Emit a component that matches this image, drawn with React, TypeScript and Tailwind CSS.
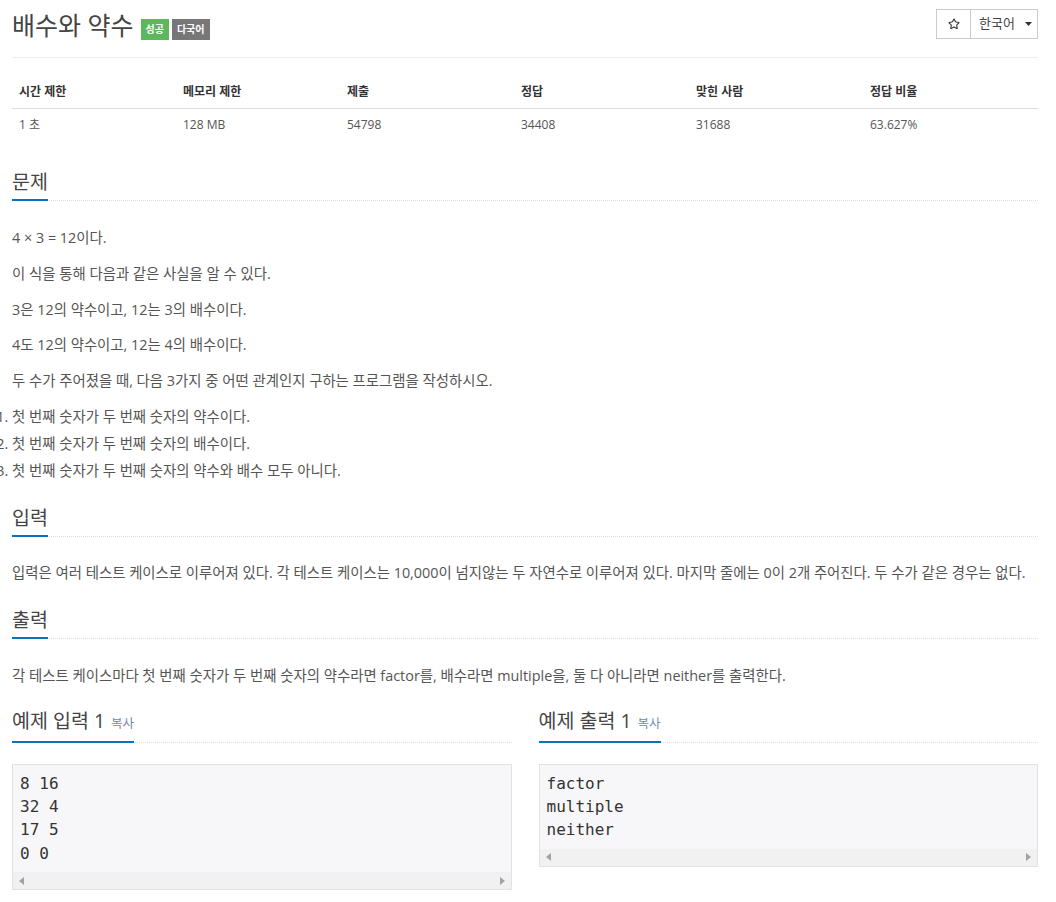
import React from "react";
import { Star } from "lucide-react";

function SectionHeading({ children }: { children: React.ReactNode }) {
  return (
    <div className="border-b border-dotted border-[#dddddd]">
      <h2 className="-mb-px inline-block border-b-2 border-[#0076c0] pb-[3px] text-[19.5px] leading-[28px] font-normal text-[#444]">
        {children}
      </h2>
    </div>
  );
}

function ScrollBar() {
  return (
    <div className="flex h-[17px] items-center justify-between bg-[#f1f1f1]">
      <div className="flex h-[17px] w-[17px] items-center justify-center">
        <svg width="5" height="8" viewBox="0 0 5 8">
          <polygon points="5,0 5,8 0,4" fill="#a3a3a3" />
        </svg>
      </div>
      <div className="flex h-[17px] w-[17px] items-center justify-center">
        <svg width="5" height="8" viewBox="0 0 5 8">
          <polygon points="0,0 0,8 5,4" fill="#a3a3a3" />
        </svg>
      </div>
    </div>
  );
}

function SampleBox({ lines }: { lines: string[] }) {
  return (
    <div className="mt-[21px] border border-[#e1e1e8] bg-[#f7f7f9]">
      <pre className="px-[7px] py-[7px] font-['DejaVu_Sans_Mono',monospace] text-[16px] leading-[23.33px] text-[#333]">
        {lines.join("\n")}
      </pre>
      <ScrollBar />
    </div>
  );
}

export default function App() {
  const stats = [
    ["시간 제한", "1 초"],
    ["메모리 제한", "128 MB"],
    ["제출", "54798"],
    ["정답", "34408"],
    ["맞힌 사람", "31688"],
    ["정답 비율", "63.627%"],
  ];
  const widths = ["w-[164px]", "w-[164px]", "w-[174px]", "w-[175px]", "w-[174px]", ""];

  return (
    <div className="min-h-screen bg-white pl-[12px] pr-[18px] pb-[13px] font-['Open_Sans','Noto_Sans_CJK_KR',sans-serif] text-[14.4px] text-[#555]">
      {/* Header */}
      <div className="box-content flex h-[57px] items-start justify-between border-b border-[#eeeeee]">
        <div className="flex items-start">
          <h1 className="mt-[8px] text-[25px] leading-[34px] font-normal text-[#444]">배수와 약수</h1>
          <div className="ml-[7px] mt-[19px] flex gap-[3px]">
            <span className="h-[21px] bg-[#5cb85c] px-[5px] text-[10px] leading-[21px] font-bold text-white">성공</span>
            <span className="h-[21px] bg-[#777777] px-[5px] text-[10px] leading-[21px] font-bold text-white">다국어</span>
          </div>
        </div>
        <div className="mt-[9px] flex">
          <button className="flex h-[30px] w-[35px] items-center justify-center border border-[#cccccc] bg-white text-[#333]">
            <Star size={12} strokeWidth={2.2} />
          </button>
          <button className="-ml-px flex h-[30px] w-[68px] items-center border border-[#cccccc] bg-white pl-[8px] text-[13px] text-[#444]">
            <span>한국어</span>
            <svg className="ml-[10px]" width="7" height="4" viewBox="0 0 7 4">
              <polygon points="0,0 7,0 3.5,4" fill="#333" />
            </svg>
          </button>
        </div>
      </div>

      {/* Stats table */}
      <table className="mt-[16px] w-full border-collapse text-left text-[12px]">
        <thead>
          <tr className="border-b border-[#dddddd]">
            {stats.map(([h], i) => (
              <th key={h} className={`${widths[i]} px-[7px] pt-[9px] pb-[7px] leading-[18px] font-bold text-[#333]`}>
                {h}
              </th>
            ))}
          </tr>
        </thead>
        <tbody>
          <tr>
            {stats.map(([h, v]) => (
              <td key={h} className="px-[7px] pt-[7px] pb-[9px] leading-[18px] text-[#555]">
                {v}
              </td>
            ))}
          </tr>
        </tbody>
      </table>

      {/* 문제 */}
      <div className="mt-[25px]">
        <SectionHeading>문제</SectionHeading>
        <div className="mt-[26px] leading-[22px]">
          <p className="mb-[13.75px]">4 × 3 = 12이다.</p>
          <p className="mb-[13.75px]">이 식을 통해 다음과 같은 사실을 알 수 있다.</p>
          <p className="mb-[13.75px]">3은 12의 약수이고, 12는 3의 배수이다.</p>
          <p className="mb-[13.75px]">4도 12의 약수이고, 12는 4의 배수이다.</p>
          <p className="mb-[13.75px]">두 수가 주어졌을 때, 다음 3가지 중 어떤 관계인지 구하는 프로그램을 작성하시오.</p>
          <ol className="list-outside list-decimal pl-0">
            <li className="mb-[5px]">첫 번째 숫자가 두 번째 숫자의 약수이다.</li>
            <li className="mb-[5px]">첫 번째 숫자가 두 번째 숫자의 배수이다.</li>
            <li>첫 번째 숫자가 두 번째 숫자의 약수와 배수 모두 아니다.</li>
          </ol>
        </div>
      </div>

      {/* 입력 */}
      <div className="mt-[22px]">
        <SectionHeading>입력</SectionHeading>
        <p className="mt-[25px] leading-[22px]">
          입력은 여러 테스트 케이스로 이루어져 있다. 각 테스트 케이스는 10,000이 넘지않는 두 자연수로 이루어져 있다. 마지막 줄에는 0이 2개 주어진다. 두 수가 같은 경우는 없다.
        </p>
      </div>

      {/* 출력 */}
      <div className="mt-[22px]">
        <SectionHeading>출력</SectionHeading>
        <p className="mt-[26px] leading-[22px]">
          각 테스트 케이스마다 첫 번째 숫자가 두 번째 숫자의 약수라면 factor를, 배수라면 multiple을, 둘 다 아니라면 neither를 출력한다.
        </p>
      </div>

      {/* 예제 */}
      <div className="mt-[20px] grid grid-cols-2 gap-[27px]">
        <div>
          <SectionHeading>
            예제 입력 1 <span className="ml-[1px] text-[12.5px] text-[#6d8ac2]">복사</span>
          </SectionHeading>
          <SampleBox lines={["8 16", "32 4", "17 5", "0 0"]} />
        </div>
        <div>
          <SectionHeading>
            예제 출력 1 <span className="ml-[1px] text-[12.5px] text-[#6d8ac2]">복사</span>
          </SectionHeading>
          <SampleBox lines={["factor", "multiple", "neither"]} />
        </div>
      </div>
    </div>
  );
}
